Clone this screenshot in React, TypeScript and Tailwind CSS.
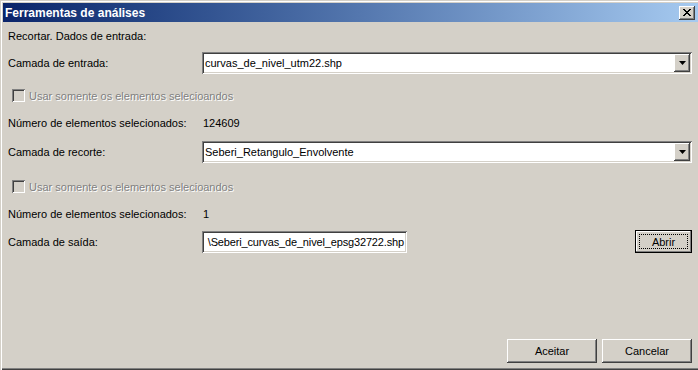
import React from 'react';

const sunken =
  'shadow-[inset_1px_1px_0_#808080,inset_-1px_-1px_0_#ffffff,inset_2px_2px_0_#404040,inset_-2px_-2px_0_#d4d0c8]';
const raised =
  'shadow-[inset_-1px_-1px_0_#404040,inset_1px_1px_0_#ffffff,inset_-2px_-2px_0_#808080]';

const ComboBox: React.FC<{ value: string }> = ({ value }) => (
  <div className={`flex items-center w-[490px] h-[22px] bg-white p-[2px] ${sunken}`}>
    <span className="flex-1 pl-[1px] whitespace-nowrap overflow-hidden">{value}</span>
    <div className={`flex items-center justify-center w-[16px] h-[18px] bg-[#d4d0c8] ${raised}`}>
      <svg width="7" height="4" viewBox="0 0 7 4">
        <path d="M0 0h7L3.5 4z" fill="#000" />
      </svg>
    </div>
  </div>
);

const DisabledCheck: React.FC<{ label: string }> = ({ label }) => (
  <div className="flex items-center h-[13px] pl-[4px] gap-[4px]">
    <div className={`w-[13px] h-[13px] bg-[#d4d0c8] ${sunken}`} />
    <span className="text-[#808080] [text-shadow:1px_1px_0_#ffffff]">{label}</span>
  </div>
);

const Label: React.FC<{ children: React.ReactNode }> = ({ children }) => (
  <div className="w-[194px] shrink-0">{children}</div>
);

const Button: React.FC<{ children: React.ReactNode }> = ({ children }) => (
  <div className={`flex items-center justify-center w-[90px] h-[24px] bg-[#d4d0c8] ${raised}`}>
    {children}
  </div>
);

export default function App() {
  return (
    <div className="w-[698px] h-[370px] bg-[#d4d0c8] flex flex-col overflow-hidden text-[11px] leading-[14px] text-black font-['Liberation_Sans',Arial,sans-serif] shadow-[inset_1px_1px_0_#d4d0c8,inset_2px_2px_0_#ffffff,inset_0_-1px_0_#404040,inset_0_-2px_0_#808080]">
      {/* barra de título */}
      <div className="ml-[3px] mt-[3px] h-[19px] flex items-center bg-linear-to-r from-[#0a246a] to-[#a6caf0]">
        <span className="pl-[2px] text-white font-bold text-[12px]">Ferramentas de análises</span>
        <div className={`ml-auto mr-[3px] w-[16px] h-[14px] flex items-center justify-center bg-[#d4d0c8] ${raised}`}>
          <svg width="8" height="7" viewBox="0 0 8 7" shapeRendering="crispEdges">
            <path d="M0 0h2v1h1v1h2V1h1V0h2v1H7v1H6v1H5v1h1v1h1v1h1v1H6V6H5V5H3v1H2v1H0V6h1V5h1V4h1V3H2V2H1V1H0z" fill="#000" />
          </svg>
        </div>
      </div>

      <div className="flex-1 flex flex-col pl-[8px] pr-[6px]">
        <div className="mt-[7px] h-[14px]">Recortar. Dados de entrada:</div>

        <div className="mt-[9px] h-[22px] flex items-center">
          <Label>Camada de entrada:</Label>
          <ComboBox value="curvas_de_nivel_utm22.shp" />
        </div>

        <div className="mt-[15px]">
          <DisabledCheck label="Usar somente os elementos selecioandos" />
        </div>

        <div className="mt-[14px] h-[14px] flex items-center">
          <Label>Número de elementos selecionados:</Label>
          <span className="pl-[1px]">124609</span>
        </div>

        <div className="mt-[11px] h-[22px] flex items-center">
          <Label>Camada de recorte:</Label>
          <ComboBox value="Seberi_Retangulo_Envolvente" />
        </div>

        <div className="mt-[17px]">
          <DisabledCheck label="Usar somente os elementos selecioandos" />
        </div>

        <div className="mt-[14px] h-[14px] flex items-center">
          <Label>Número de elementos selecionados:</Label>
          <span className="pl-[1px]">1</span>
        </div>

        <div className="mt-[9px] h-[23px] flex items-center">
          <Label>Camada de saída:</Label>
          <div className={`w-[205px] h-[22px] mt-[1px] bg-white p-[2px] flex items-center justify-end overflow-hidden ${sunken}`}>
            <span className="whitespace-nowrap pr-[1px] tracking-[-0.15px]">\Seberi_curvas_de_nivel_epsg32722.shp</span>
          </div>
          <div className="ml-auto w-[57px] h-[23px] border border-black bg-[#d4d0c8] p-[3px] shadow-[inset_-1px_-1px_0_#808080,inset_1px_1px_0_#ffffff]">
            <div className="w-full h-full border border-dotted border-black flex items-center justify-center">
              Abrir
            </div>
          </div>
        </div>

        <div className="mt-auto mb-[7px] flex justify-end gap-[5px]">
          <Button>Aceitar</Button>
          <Button>Cancelar</Button>
        </div>
      </div>
    </div>
  );
}
